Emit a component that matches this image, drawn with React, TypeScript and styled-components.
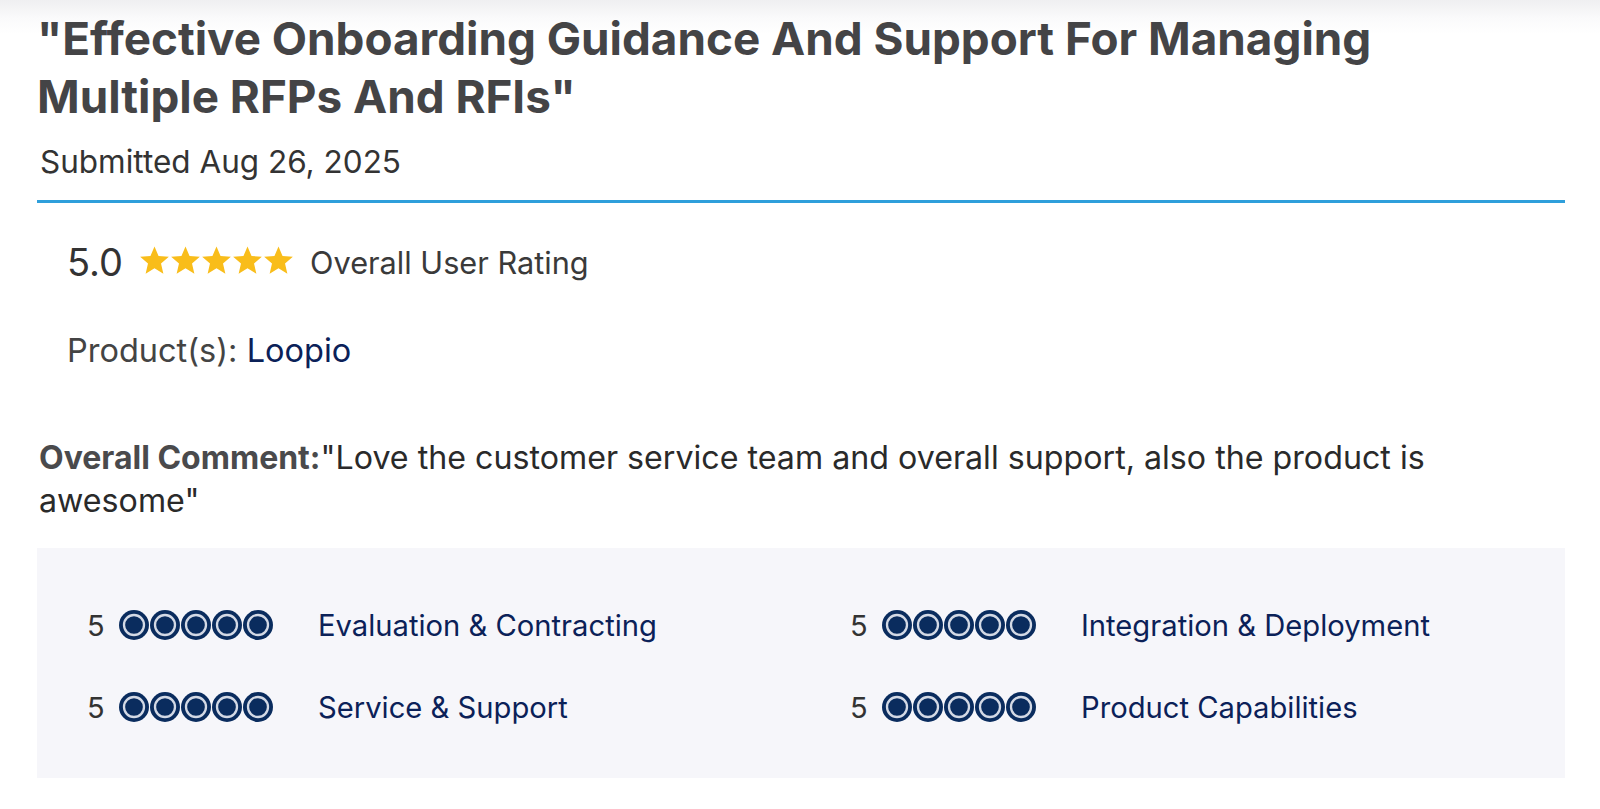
import React from "react";
import styled, { createGlobalStyle } from "styled-components";

const Global = createGlobalStyle`
  html, body { margin: 0; padding: 0; }
  body {
    background: linear-gradient(180deg, #efeff1 0px, #fafafb 18px, #ffffff 34px) no-repeat, #ffffff;
    font-family: Inter, "Liberation Sans", Arial, sans-serif;
    color: #333;
    -webkit-font-smoothing: antialiased;
  }
`;

const Page = styled.main`
  padding: 10px 35px 0 37px;
  width: 1600px;
  box-sizing: border-box;
`;

const Title = styled.h1`
  margin: 0;
  max-width: 1420px;
  font-size: 45.8px;
  line-height: 58px;
  font-weight: 700;
  color: #444446;
`;

const Submitted = styled.div`
  margin-top: 16px;
  padding: 0 0 18px 3px;
  font-size: 31.5px;
  line-height: 40px;
  color: #333;
  border-bottom: 3px solid #2f9fdb;
`;

const RatingRow = styled.div`
  margin-top: 37px;
  padding-left: 30px;
  display: flex;
  align-items: center;
  height: 44px;
`;

const Score = styled.span`
  font-size: 38px;
  color: #333;
  margin-right: 16px;
`;

const Stars = styled.span`
  display: inline-flex;
  margin-right: 16px;
  margin-top: -4px;
`;

const RatingLabel = styled.span`
  font-size: 30.7px;
  color: #3a3a3a;
`;

const ProductLine = styled.div`
  margin-top: 45px;
  padding-left: 30px;
  font-size: 32.5px;
  line-height: 44px;
  color: #444;
`;

const ProductLink = styled.a`
  color: #0b2158;
  text-decoration: none;
`;

const Comment = styled.p`
  margin: 63px 0 0 2px;
  max-width: 1440px;
  font-size: 32.2px;
  line-height: 43px;
  color: #2a2a2a;
`;

const CommentLabel = styled.strong`
  font-size: 32px;
  font-weight: 700;
  color: #4a4a4c;
`;

const CommentText = styled.span`
  color: #2a2a2a;
`;

const Panel = styled.section`
  margin-top: 26px;
  background: #f6f6fa;
  padding: 57px 0 51px 50px;
  display: grid;
  grid-template-columns: 763px 1fr;
  row-gap: 42px;
`;

const Item = styled.div`
  display: flex;
  align-items: center;
  height: 40px;
`;

const ItemScore = styled.span`
  font-size: 29px;
  color: #333;
  width: 17px;
  margin-right: 15px;
`;

const Circles = styled.span`
  display: inline-flex;
  gap: 1px;
  margin-right: 45px;
`;

const ItemLabel = styled.span`
  font-size: 29.2px;
  color: #0b2158;
`;

const Star = () => (
  <svg width="31" height="31" viewBox="1.2 1 21.6 21.6">
    <path
      d="M12 17.27L18.18 21l-1.64-7.03L22 9.24l-7.19-.61L12 2 9.19 8.63 2 9.24l5.46 4.73L5.82 21z"
      fill="#f9bd1a"
    />
  </svg>
);

const RatingCircle = () => (
  <svg width="30" height="30" viewBox="0 0 30 30">
    <circle cx="15" cy="15" r="15" fill="#0a2c5e" />
    <circle cx="15" cy="15" r="10" fill="none" stroke="#d3d9e5" strokeWidth="2.3" />
    <circle cx="15" cy="15" r="7.8" fill="#0a2c5e" />
  </svg>
);

const five = [0, 1, 2, 3, 4];

const categories = [
  "Evaluation & Contracting",
  "Integration & Deployment",
  "Service & Support",
  "Product Capabilities",
];

export default function App() {
  return (
    <>
      <Global />
      <Page>
        <Title>
          "Effective Onboarding Guidance And Support For Managing Multiple RFPs And RFIs"
        </Title>
        <Submitted>Submitted Aug 26, 2025</Submitted>
        <RatingRow>
          <Score>5.0</Score>
          <Stars>
            {five.map((i) => (
              <Star key={i} />
            ))}
          </Stars>
          <RatingLabel>Overall User Rating</RatingLabel>
        </RatingRow>
        <ProductLine>
          Product(s): <ProductLink href="#">Loopio</ProductLink>
        </ProductLine>
        <Comment>
          <CommentLabel>Overall Comment:</CommentLabel>
          <CommentText>
            "Love the customer service team and overall support, also the product is awesome"
          </CommentText>
        </Comment>
        <Panel>
          {categories.map((c) => (
            <Item key={c}>
              <ItemScore>5</ItemScore>
              <Circles>
                {five.map((i) => (
                  <RatingCircle key={i} />
                ))}
              </Circles>
              <ItemLabel>{c}</ItemLabel>
            </Item>
          ))}
        </Panel>
      </Page>
    </>
  );
}
